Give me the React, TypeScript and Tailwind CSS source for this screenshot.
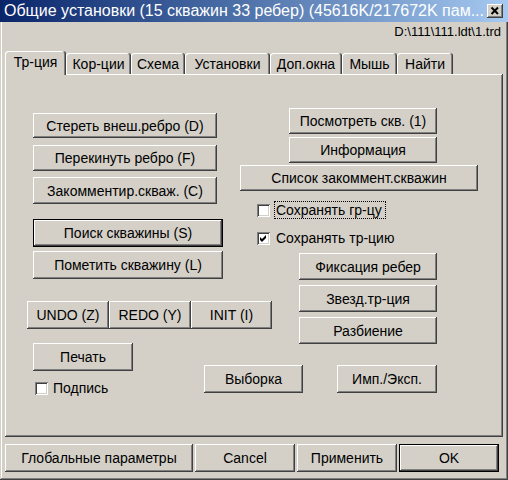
import React from "react";

const raised =
  "bg-[#d4d0c8] shadow-[inset_-1px_-1px_#404040,inset_1px_1px_#ffffff,inset_-2px_-2px_#808080]";

function Btn({
  className = "",
  def = false,
  children,
}: {
  className?: string;
  def?: boolean;
  children: React.ReactNode;
}) {
  return (
    <div
      className={
        "flex shrink-0 items-center justify-center text-[14px] leading-[16px] text-black " +
        raised +
        (def ? " border border-black" : "") +
        " " +
        className
      }
    >
      {children}
    </div>
  );
}

function Check({ checked = false }: { checked?: boolean }) {
  return (
    <div className="relative h-[13px] w-[13px] shrink-0 bg-white shadow-[inset_1px_1px_#808080,inset_-1px_-1px_#ffffff,inset_2px_2px_#404040,inset_-2px_-2px_#d4d0c8]">
      {checked && (
        <svg width="13" height="13" viewBox="0 0 13 13" className="absolute left-0 top-0">
          <path d="M3 5 L5 7 L9 3 L9 6 L5 10 L3 8 Z" fill="#000" />
        </svg>
      )}
    </div>
  );
}

function Tab({
  className = "",
  selected = false,
  children,
}: {
  className?: string;
  selected?: boolean;
  children: React.ReactNode;
}) {
  return (
    <div
      className={
        "flex shrink-0 justify-center rounded-t-[3px] bg-[#d4d0c8] pt-[3px] text-[14px] leading-[16px] text-black shadow-[inset_-1px_0_#404040,inset_1px_1px_#ffffff,inset_-2px_0_#808080] " +
        (selected ? "relative z-10 -mb-[1px] h-[24px] " : "h-[21px] ") +
        className
      }
    >
      {children}
    </div>
  );
}

export default function App() {
  return (
    <div
      className="relative flex h-[480px] w-[508px] flex-col overflow-hidden bg-[#d4d0c8] shadow-[inset_-1px_-1px_#404040,inset_1px_1px_#d4d0c8,inset_-2px_-2px_#808080,inset_2px_2px_#ffffff]"
      style={{ fontFamily: '"Liberation Sans", Arial, sans-serif' }}
    >
      {/* Title bar */}
      <div className="flex h-[22px] w-full shrink-0 items-center bg-gradient-to-r from-[#0a246a] to-[#a6caf0] pl-[4px] pr-[5px]">
        <div className="flex-1 whitespace-nowrap text-[16px] leading-[18px] text-white">
          Общие установки (15 скважин 33 ребер) (45616K/217672K пам...
        </div>
        <div className={"flex h-[14px] w-[16px] items-center justify-center " + raised}>
          <svg width="16" height="14" viewBox="0 0 16 14">
            <path d="M4.5 3.5 L11 10 M11 3.5 L4.5 10" stroke="#000" strokeWidth="2" />
          </svg>
        </div>
      </div>

      {/* Path */}
      <div className="mt-[2px] h-[15px] pr-[7px] text-right text-[13px] leading-[15px] text-black">
        D:\111\111.ldt\1.trd
      </div>

      {/* Tabs */}
      <div className="mt-[12px] flex h-[23px] items-end pl-[5px]">
        <Tab selected className="w-[61px]">Тр-ция</Tab>
        <Tab className="w-[65px]">Кор-ции</Tab>
        <Tab className="w-[54px]">Схема</Tab>
        <Tab className="w-[85px]">Установки</Tab>
        <Tab className="w-[72px]">Доп.окна</Tab>
        <Tab className="w-[55px]">Мышь</Tab>
        <Tab className="w-[56px]">Найти</Tab>
      </div>

      {/* Panel */}
      <div className="ml-[5px] flex h-[363px] w-[498px] shrink-0 items-start bg-[#d4d0c8] shadow-[inset_-1px_-1px_#404040,inset_1px_1px_#ffffff,inset_-2px_-2px_#808080]">
        {/* Left column */}
        <div className="ml-[22px] mt-[39px] flex w-[213px] shrink-0 flex-col items-start">
          <Btn className="ml-[6px] h-[25px] w-[184px]">Стереть внеш.ребро (D)</Btn>
          <Btn className="ml-[6px] mt-[7px] h-[26px] w-[184px]">Перекинуть ребро (F)</Btn>
          <Btn className="ml-[6px] mt-[6px] h-[27px] w-[184px]">Закомментир.скваж. (С)</Btn>
          <Btn def className="ml-[6px] mt-[15px] h-[28px] w-[190px]">Поиск скважины (S)</Btn>
          <Btn className="ml-[6px] mt-[4px] h-[28px] w-[190px]">Пометить скважину (L)</Btn>
          <div className="mt-[22px] flex">
            <Btn className="h-[28px] w-[82px]">UNDO (Z)</Btn>
            <Btn className="h-[28px] w-[82px]">REDO (Y)</Btn>
            <Btn className="h-[28px] w-[81px]">INIT (I)</Btn>
          </div>
          <Btn className="ml-[6px] mt-[14px] h-[28px] w-[100px]">Печать</Btn>
          <div className="ml-[8px] mt-[9px] flex items-center gap-[5px]">
            <Check />
            <span className="text-[14px] leading-[16px] text-black">Подпись</span>
          </div>
        </div>

        {/* Right column */}
        <div className="mt-[34px] flex flex-col items-start">
          <Btn className="ml-[49px] h-[26px] w-[148px]">Посмотреть скв. (1)</Btn>
          <Btn className="ml-[49px] mt-[3px] h-[26px] w-[148px]">Информация</Btn>
          <Btn className="mt-[2px] h-[26px] w-[238px]">Список закоммент.скважин</Btn>
          <div className="ml-[17px] mt-[10px] flex h-[18px] items-center">
            <Check />
            <span className="ml-[4px] flex h-[18px] w-[112px] items-center border border-dotted border-black pl-[1px] text-[14px] leading-[16px] text-black">
              Сохранять гр-цу
            </span>
          </div>
          <div className="ml-[17px] mt-[10px] flex h-[18px] items-center">
            <Check checked />
            <span className="ml-[6px] text-[14px] leading-[16px] text-black">Сохранять тр-цию</span>
          </div>
          <Btn className="ml-[59px] mt-[6px] h-[27px] w-[138px]">Фиксация ребер</Btn>
          <Btn className="ml-[59px] mt-[5px] h-[27px] w-[138px]">Звезд.тр-ция</Btn>
          <Btn className="ml-[59px] mt-[5px] h-[27px] w-[138px]">Разбиение</Btn>
          <div className="-ml-[36px] mt-[21px] flex gap-[34px]">
            <Btn className="h-[28px] w-[99px]">Выборка</Btn>
            <Btn className="h-[28px] w-[100px]">Имп./Эксп.</Btn>
          </div>
        </div>
      </div>

      {/* Bottom buttons */}
      <div className="ml-[5px] mt-[7px] flex gap-[2px]">
        <Btn className="h-[28px] w-[188px]">Глобальные параметры</Btn>
        <Btn className="h-[28px] w-[100px]">Cancel</Btn>
        <Btn className="h-[28px] w-[100px]">Применить</Btn>
        <Btn def className="h-[28px] w-[100px]">OK</Btn>
      </div>
    </div>
  );
}
